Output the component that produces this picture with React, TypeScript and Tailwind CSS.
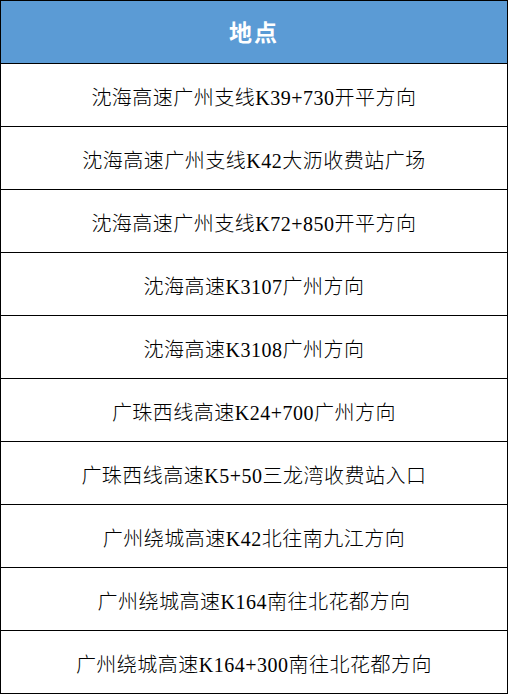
const rows = [
  "沈海高速广州支线K39+730开平方向",
  "沈海高速广州支线K42大沥收费站广场",
  "沈海高速广州支线K72+850开平方向",
  "沈海高速K3107广州方向",
  "沈海高速K3108广州方向",
  "广珠西线高速K24+700广州方向",
  "广珠西线高速K5+50三龙湾收费站入口",
  "广州绕城高速K42北往南九江方向",
  "广州绕城高速K164南往北花都方向",
  "广州绕城高速K164+300南往北花都方向",
];

export default function App() {
  return (
    <div
      className="w-[508px] border border-black bg-white text-black"
      style={{ fontFamily: '"Liberation Serif", "Noto Sans CJK SC", serif' }}
    >
      <div className="flex h-[63px] items-center justify-center border-b border-black bg-[#5b9bd5] pt-1 text-[23px] font-bold tracking-[2px] text-white">
        地点
      </div>
      {rows.map((r, i) => (
        <div
          key={i}
          className={
            i < rows.length - 1
              ? "flex h-[63px] items-center justify-center border-b border-black pt-[5px] text-[20px] font-light tracking-[0.5px]"
              : "flex h-[62px] items-center justify-center pt-[5px] text-[20px] font-light tracking-[0.5px]"
          }
        >
          {r}
        </div>
      ))}
    </div>
  );
}
